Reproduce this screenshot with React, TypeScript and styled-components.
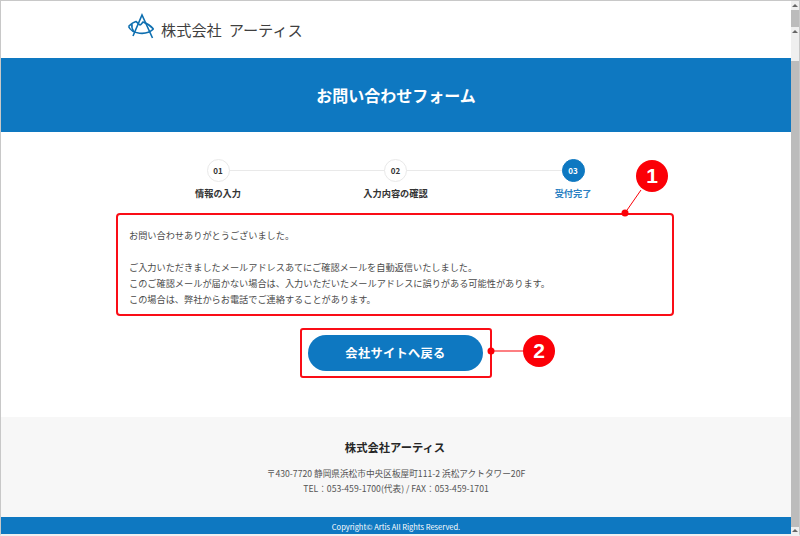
import React from "react";
import styled, { createGlobalStyle } from "styled-components";

const GlobalStyle = createGlobalStyle`
  html, body {
    margin: 0;
    padding: 0;
    background: #fff;
    overflow: hidden;
  }
  * {
    box-sizing: border-box;
  }
  body {
    font-family: "Noto Sans CJK JP", "Noto Sans", sans-serif;
  }
`;

const BLUE = "#0e78c1";
const RED = "#fa0d16";

const Frame = styled.div`
  position: relative;
  width: 800px;
  height: 536px;
  display: flex;
  overflow: hidden;
  background: #fff;
  border-top: 1px solid #c8c8c8;
  border-left: 1px solid #c8c8c8;
  border-right: 1px solid #c8c8c8;
  border-bottom: 2px solid #f0f0f0;
`;

const Page = styled.div`
  flex: 1;
  min-width: 0;
  display: flex;
  flex-direction: column;
`;

const TopBar = styled.header`
  height: 57px;
  padding: 11px 0 0 126px;
  display: flex;
  align-items: flex-start;
  gap: 4px;
`;

const LogoText = styled.div`
  font-size: 15.2px;
  line-height: 34px;
  color: #3f3f3f;
  white-space: pre;
  word-spacing: 3.5px;
`;

const Hero = styled.div`
  height: 74px;
  background: ${BLUE};
  color: #fff;
  display: flex;
  align-items: center;
  justify-content: center;
  font-size: 16px;
  font-weight: 700;
`;

const Main = styled.main`
  flex: 1;
  display: flex;
  flex-direction: column;
  align-items: center;
  padding-top: 27px;
`;

const Steps = styled.div`
  position: relative;
  width: 455px;
  height: 54px;
  display: flex;
  justify-content: space-between;
  margin-right: 1px;
`;

const StepLine = styled.div`
  position: absolute;
  top: 11px;
  left: 50px;
  right: 50px;
  height: 1px;
  background: #e9e9e9;
`;

const Step = styled.div`
  position: relative;
  width: 100px;
  display: flex;
  flex-direction: column;
  align-items: center;
  gap: 4px;
`;

const StepDot = styled.div<{ $active?: boolean }>`
  width: 23px;
  height: 23px;
  border-radius: 50%;
  display: flex;
  align-items: center;
  justify-content: center;
  font-size: 8px;
  font-weight: 700;
  background: ${(p) => (p.$active ? BLUE : "#fff")};
  color: ${(p) => (p.$active ? "#fff" : "#333")};
  border: 1px solid ${(p) => (p.$active ? BLUE : "#e9e9e9")};
`;

const StepLabel = styled.div<{ $active?: boolean }>`
  font-size: 9.2px;
  line-height: 14px;
  font-weight: 700;
  white-space: nowrap;
  color: ${(p) => (p.$active ? "#2a7fc2" : "#333")};
`;

const MessageBox = styled.div`
  width: 558px;
  height: 103px;
  margin-right: 2px;
  padding: 12px 11px 0;
  border: 2px solid ${RED};
  border-radius: 4px;
  font-size: 9.18px;
  line-height: 16px;
  color: #4a4a4a;
`;

const MessageLine = styled.div`
  height: 16px;
  white-space: nowrap;
`;

const ButtonFrame = styled.div`
  width: 192px;
  height: 50px;
  margin-top: 12px;
  margin-right: 1px;
  border: 2px solid ${RED};
  border-radius: 3px;
  display: flex;
  align-items: center;
  justify-content: center;
`;

const BackButton = styled.button`
  width: 175px;
  height: 36px;
  border: none;
  border-radius: 18px;
  background: ${BLUE};
  color: #fff;
  font-family: inherit;
  font-size: 12.2px;
  font-weight: 700;
  letter-spacing: 0.35px;
  padding: 0;
`;

const Footer = styled.footer`
  height: 100px;
  margin-top: 1px;
  background: #f7f7f7;
  display: flex;
  flex-direction: column;
  align-items: center;
  padding-top: 21px;
`;

const FooterName = styled.div`
  font-size: 11.3px;
  line-height: 18px;
  font-weight: 700;
  color: #262626;
  margin-right: 2px;
`;

const FooterAddress = styled.div`
  margin-top: 10px;
  font-size: 8.66px;
  line-height: 15px;
  color: #555;
  text-align: center;
`;

const CopyrightBar = styled.div`
  height: 17px;
  background: ${BLUE};
  color: #fff;
  font-size: 7.5px;
  line-height: 19px;
  text-align: center;
`;

const Scrollbar = styled.div`
  width: 8px;
  background: #efefef;
  display: flex;
  flex-direction: column;
  flex-shrink: 0;
`;

const ScrollArrow = styled.div<{ $height: number }>`
  width: 100%;
  height: ${(p) => p.$height}px;
  display: flex;
  align-items: center;
  justify-content: center;
  &::before {
    content: "";
    width: 0;
    height: 0;
    border-left: 3px solid transparent;
    border-right: 3px solid transparent;
    border-bottom: 3px solid #666;
  }
`;

const ScrollThumb = styled.div<{ $height: number }>`
  width: 100%;
  height: ${(p) => p.$height}px;
  background: #bcbcbc;
`;

const ScrollGap = styled.div<{ $height: number }>`
  height: ${(p) => p.$height}px;
`;

const Badge = styled.div<{ $x: number; $y: number }>`
  position: absolute;
  left: ${(p) => p.$x}px;
  top: ${(p) => p.$y}px;
  width: 32px;
  height: 32px;
  border-radius: 50%;
  background: #fb0007;
  color: #fff;
  display: flex;
  align-items: center;
  justify-content: center;
  font-family: "Liberation Sans", sans-serif;
  font-size: 21px;
  font-weight: 700;
`;

const Leader = styled.svg`
  position: absolute;
  left: 0;
  top: 0;
  pointer-events: none;
`;

function Logo() {
  return (
    <svg width="30" height="30" viewBox="127 12 30 30" fill="none" stroke="#0e6fb0" strokeWidth="1.6">
      <path d="M133 36 L142 15 L152.5 38" />
      <path d="M128.5 26.5 C131 24 134 22 136 21.5 C138 23 139 25 140 25 C141 25 142 23 143 22 C146 23 150 25 153.5 29" />
      <path d="M128.5 26.5 C132 34 146 36 153.5 29" />
      <path d="M132 24 C131.5 27 132 29 133.5 31" />
    </svg>
  );
}

export default function App() {
  return (
    <>
      <GlobalStyle />
      <Frame>
        <Page>
          <TopBar>
            <Logo />
            <LogoText>株式会社 アーティス</LogoText>
          </TopBar>
          <Hero>お問い合わせフォーム</Hero>
          <Main>
            <Steps>
              <StepLine />
              <Step>
                <StepDot>01</StepDot>
                <StepLabel>情報の入力</StepLabel>
              </Step>
              <Step>
                <StepDot>02</StepDot>
                <StepLabel>入力内容の確認</StepLabel>
              </Step>
              <Step>
                <StepDot $active>03</StepDot>
                <StepLabel $active>受付完了</StepLabel>
              </Step>
            </Steps>
            <MessageBox>
              <MessageLine>お問い合わせありがとうございました。</MessageLine>
              <MessageLine />
              <MessageLine>ご入力いただきましたメールアドレスあてにご確認メールを自動返信いたしました。</MessageLine>
              <MessageLine>このご確認メールが届かない場合は、入力いただいたメールアドレスに誤りがある可能性があります。</MessageLine>
              <MessageLine>この場合は、弊社からお電話でご連絡することがあります。</MessageLine>
            </MessageBox>
            <ButtonFrame>
              <BackButton>会社サイトへ戻る</BackButton>
            </ButtonFrame>
          </Main>
          <Footer>
            <FooterName>株式会社アーティス</FooterName>
            <FooterAddress>
              〒430-7720 静岡県浜松市中央区板屋町111-2 浜松アクトタワー20F
              <br />
              TEL：053-459-1700(代表) / FAX：053-459-1701
            </FooterAddress>
          </Footer>
          <CopyrightBar>Copyright© Artis All Rights Reserved.</CopyrightBar>
        </Page>
        <Scrollbar>
          <ScrollArrow $height={9} />
          <ScrollThumb $height={17} />
          <ScrollArrow $height={8} />
          <ScrollGap $height={26} />
          <ScrollThumb $height={466} />
          <ScrollArrow $height={7} />
        </Scrollbar>
        <Leader width="800" height="536" viewBox="1 1 800 536">
          <path d="M625 213 L641 190" stroke="#fb0007" strokeWidth="1" />
          <circle cx="625" cy="213" r="3.5" fill="#fb0007" />
          <path d="M491 351 L525 351" stroke="#fb0007" strokeWidth="1.2" />
          <circle cx="491" cy="351" r="3.5" fill="#fb0007" />
        </Leader>
        <Badge $x={635} $y={159}>1</Badge>
        <Badge $x={522} $y={334}>2</Badge>
      </Frame>
    </>
  );
}
